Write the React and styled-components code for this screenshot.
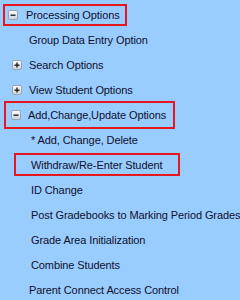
import styled, { createGlobalStyle } from "styled-components";

const GlobalStyle = createGlobalStyle`
  html, body {
    margin: 0;
    padding: 0;
    background: #99ccff;
  }
  body {
    font-family: "Liberation Sans", Arial, sans-serif;
    font-size: 11px;
    letter-spacing: -0.1px;
    color: #10102a;
  }
`;

const Tree = styled.div`
  width: 240px;
  height: 300px;
  padding-top: 2px;
  box-sizing: border-box;
  overflow: hidden;
  background: #99ccff;
`;

const Row = styled.div`
  display: flex;
  align-items: center;
  height: 25px;
  padding-left: ${(p) => p.$indent}px;
  white-space: nowrap;
`;

const Label = styled.div`
  display: inline-flex;
  align-items: center;
  box-sizing: border-box;
  height: ${(p) => p.$h || 22}px;
  border: 2px solid ${(p) => (p.$boxed ? "#e8161f" : "transparent")};
  padding: 0 ${(p) => p.$pr ?? 4}px 0 ${(p) => p.$pl ?? 2}px;
  cursor: default;
`;

const Toggle = styled.svg`
  flex-shrink: 0;
  width: 10px;
  height: 10px;
  margin-right: ${(p) => p.$gap || 7}px;
`;

const ExpandIcon = ({ open, gap }) => (
  <Toggle viewBox="0 0 10 10" $gap={gap}>
    <defs>
      <linearGradient id={open ? "gm" : "gp"} x1="0" y1="0" x2="0" y2="1">
        <stop offset="0" stopColor="#ffffff" />
        <stop offset="1" stopColor="#c9d1dc" />
      </linearGradient>
    </defs>
    <rect x="0.5" y="0.5" width="9" height="9" rx="1.5" fill={`url(#${open ? "gm" : "gp"})`} stroke="#9aa3ae" />
    <rect x="2.5" y="4.5" width="5" height="1.4" fill="#202020" />
    {!open && <rect x="4.3" y="2.5" width="1.4" height="5" fill="#202020" />}
  </Toggle>
);

export default function App() {
  return (
    <>
      <GlobalStyle />
      <Tree>
        <Row $indent={3}>
          <Label $boxed $pl={3} $pr={5}>
            <ExpandIcon open gap={8} />
            Processing Options
          </Label>
        </Row>
        <Row $indent={8}>
          <Label $pl={19}>Group Data Entry Option</Label>
        </Row>
        <Row $indent={8}>
          <Label $pl={2}>
            <ExpandIcon />
            Search Options
          </Label>
        </Row>
        <Row $indent={8}>
          <Label $pl={2}>
            <ExpandIcon />
            View Student Options
          </Label>
        </Row>
        <Row $indent={4}>
          <Label $boxed $h={28} $pl={5} $pr={7}>
            <ExpandIcon open />
            Add,Change,Update Options
          </Label>
        </Row>
        <Row $indent={8}>
          <Label $pl={21}>* Add, Change, Delete</Label>
        </Row>
        <Row $indent={14}>
          <Label $boxed $h={23} $pl={15} $pr={16}>
            Withdraw/Re-Enter Student
          </Label>
        </Row>
        <Row $indent={8}>
          <Label $pl={21}>ID Change</Label>
        </Row>
        <Row $indent={8}>
          <Label $pl={21}>Post Gradebooks to Marking Period Grades</Label>
        </Row>
        <Row $indent={8}>
          <Label $pl={21}>Grade Area Initialization</Label>
        </Row>
        <Row $indent={8}>
          <Label $pl={21}>Combine Students</Label>
        </Row>
        <Row $indent={8}>
          <Label $pl={19}>Parent Connect Access Control</Label>
        </Row>
      </Tree>
    </>
  );
}
